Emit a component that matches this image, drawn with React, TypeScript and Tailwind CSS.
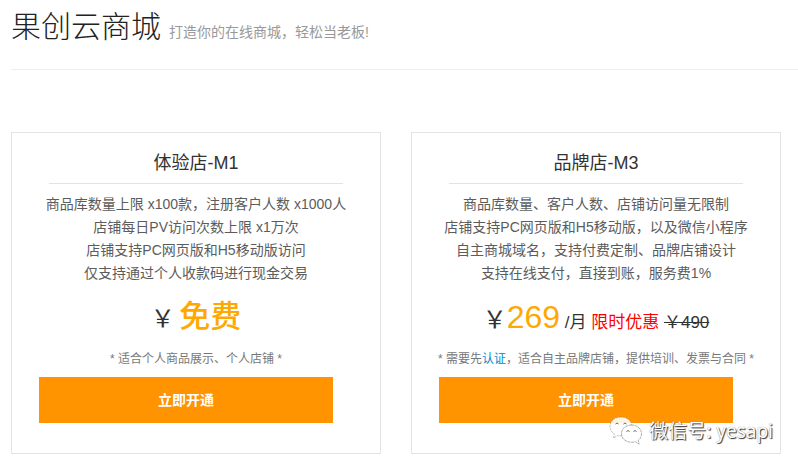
import type { ReactNode } from "react";

type Plan = {
  name: string;
  features: string[];
  price: ReactNode;
  note: ReactNode;
};

const plans: Plan[] = [
  {
    name: "体验店-M1",
    features: [
      "商品库数量上限 x100款，注册客户人数 x1000人",
      "店铺每日PV访问次数上限 x1万次",
      "店铺支持PC网页版和H5移动版访问",
      "仅支持通过个人收款码进行现金交易",
    ],
    price: (
      <>
        <span className="text-2xl leading-10">￥</span>{" "}
        <span className="text-[31px] leading-10 font-medium text-[#ffa800]">免费</span>
      </>
    ),
    note: "* 适合个人商品展示、个人店铺 *",
  },
  {
    name: "品牌店-M3",
    features: [
      "商品库数量、客户人数、店铺访问量无限制",
      "店铺支持PC网页版和H5移动版，以及微信小程序",
      "自主商城域名，支持付费定制、品牌店铺设计",
      "支持在线支付，直接到账，服务费1%",
    ],
    price: (
      <>
        <span className="text-2xl leading-10">￥</span>
        <span className="text-[32px] leading-10 text-[#ffa800]">269</span>
        <span> /月 </span>
        <span className="text-[#ff0000]">限时优惠</span> <del>￥490</del>
      </>
    ),
    note: (
      <>
        * 需要先
        <a href="#verify" className="text-[#0088cc]">
          认证
        </a>
        ，适合自主品牌店铺，提供培训、发票与合同 *
      </>
    ),
  },
];

const PlanCard = ({ name, features, price, note }: Plan) => {
  return (
    <section className="border border-[#e3e3e3] pt-4 pb-[30px] text-center">
      <h2 className="text-lg leading-7 text-[#333]">{name}</h2>
      <hr className="mx-auto mt-1.5 w-4/5 border-[#e3e3e3]" />
      <ul className="mt-[9px] text-sm leading-[23px] text-[#5c5c5c]">
        {features.map((feature) => (
          <li key={feature} className="whitespace-nowrap">
            {feature}
          </li>
        ))}
      </ul>
      <p className="mt-3 h-10 text-[17px] leading-10 whitespace-nowrap text-[#333]">{price}</p>
      <p className="mt-3 text-xs leading-5 whitespace-nowrap text-[#777]">{note}</p>
      <div className="mt-2 flex px-[27px]">
        <button
          type="button"
          className="h-[46px] w-[294px] bg-[#ff9400] text-sm font-bold text-white"
        >
          立即开通
        </button>
      </div>
    </section>
  );
};

const WechatMark = () => {
  return (
    <div className="absolute right-[25px] bottom-5 flex items-center gap-1.5 font-['Noto_Sans','Noto_Sans_CJK_SC',sans-serif] text-[19px] leading-8 whitespace-nowrap text-white [text-shadow:1px_1px_1px_#333,0_0_1px_#888]">
      <svg width="34" height="30" viewBox="0 0 34 30" fill="none" aria-hidden="true">
        <path
          d="M12 1C5.500 1 1 5.200 1 10.500c0 3.200 1.700 5.700 4.300 7.400L4.400 22l4.300-2.500c1.200.3 2.200.4 3.300.4C18.500 20 23 15.700 23 10.500S18.500 1 12 1Z"
          fill="#fff"
          fillOpacity="0.88"
          stroke="#888"
          strokeWidth="0.6"
          strokeDasharray="2 1"
        />
        <path
          d="M22.500 9C16.600 9 12.500 12.900 12.500 17.700s4.200 8.600 10 8.600c1.300 0 2.600-.2 3.800-.6l3.800 2.400-.9-3.700c2.200-1.600 3.300-3.900 3.300-6.700C32.500 12.900 28.400 9 22.500 9Z"
          fill="#fff"
          stroke="#777"
          strokeWidth="0.6"
          strokeDasharray="3 0.600"
        />
        <path
          d="M6.500 8q1.500-2 3 0M14.500 8q1.500-2 3 0M17.500 15.500q1.500-2 3 0M24.500 15.500q1.500-2 3 0"
          stroke="#555"
          strokeWidth="0.9"
        />
      </svg>
      <span>微信号: yesapi</span>
    </div>
  );
};

export default function App() {
  return (
    <div className="relative min-h-screen bg-white pb-[13px] pl-[11px] font-['Liberation_Sans','Noto_Sans_CJK_SC',sans-serif]">
      <header className="flex items-baseline gap-2 border-b border-[#eee] pt-1 pb-5">
        <h1 className="text-[30px] leading-[45px] font-light text-[#222]">果创云商城</h1>
        <p className="text-sm text-[#999]">打造你的在线商城，轻松当老板!</p>
      </header>
      <main className="mt-[62px] grid grid-cols-2 gap-[30px] pr-[17px]">
        {plans.map((plan) => (
          <PlanCard key={plan.name} {...plan} />
        ))}
      </main>
      <WechatMark />
    </div>
  );
}
